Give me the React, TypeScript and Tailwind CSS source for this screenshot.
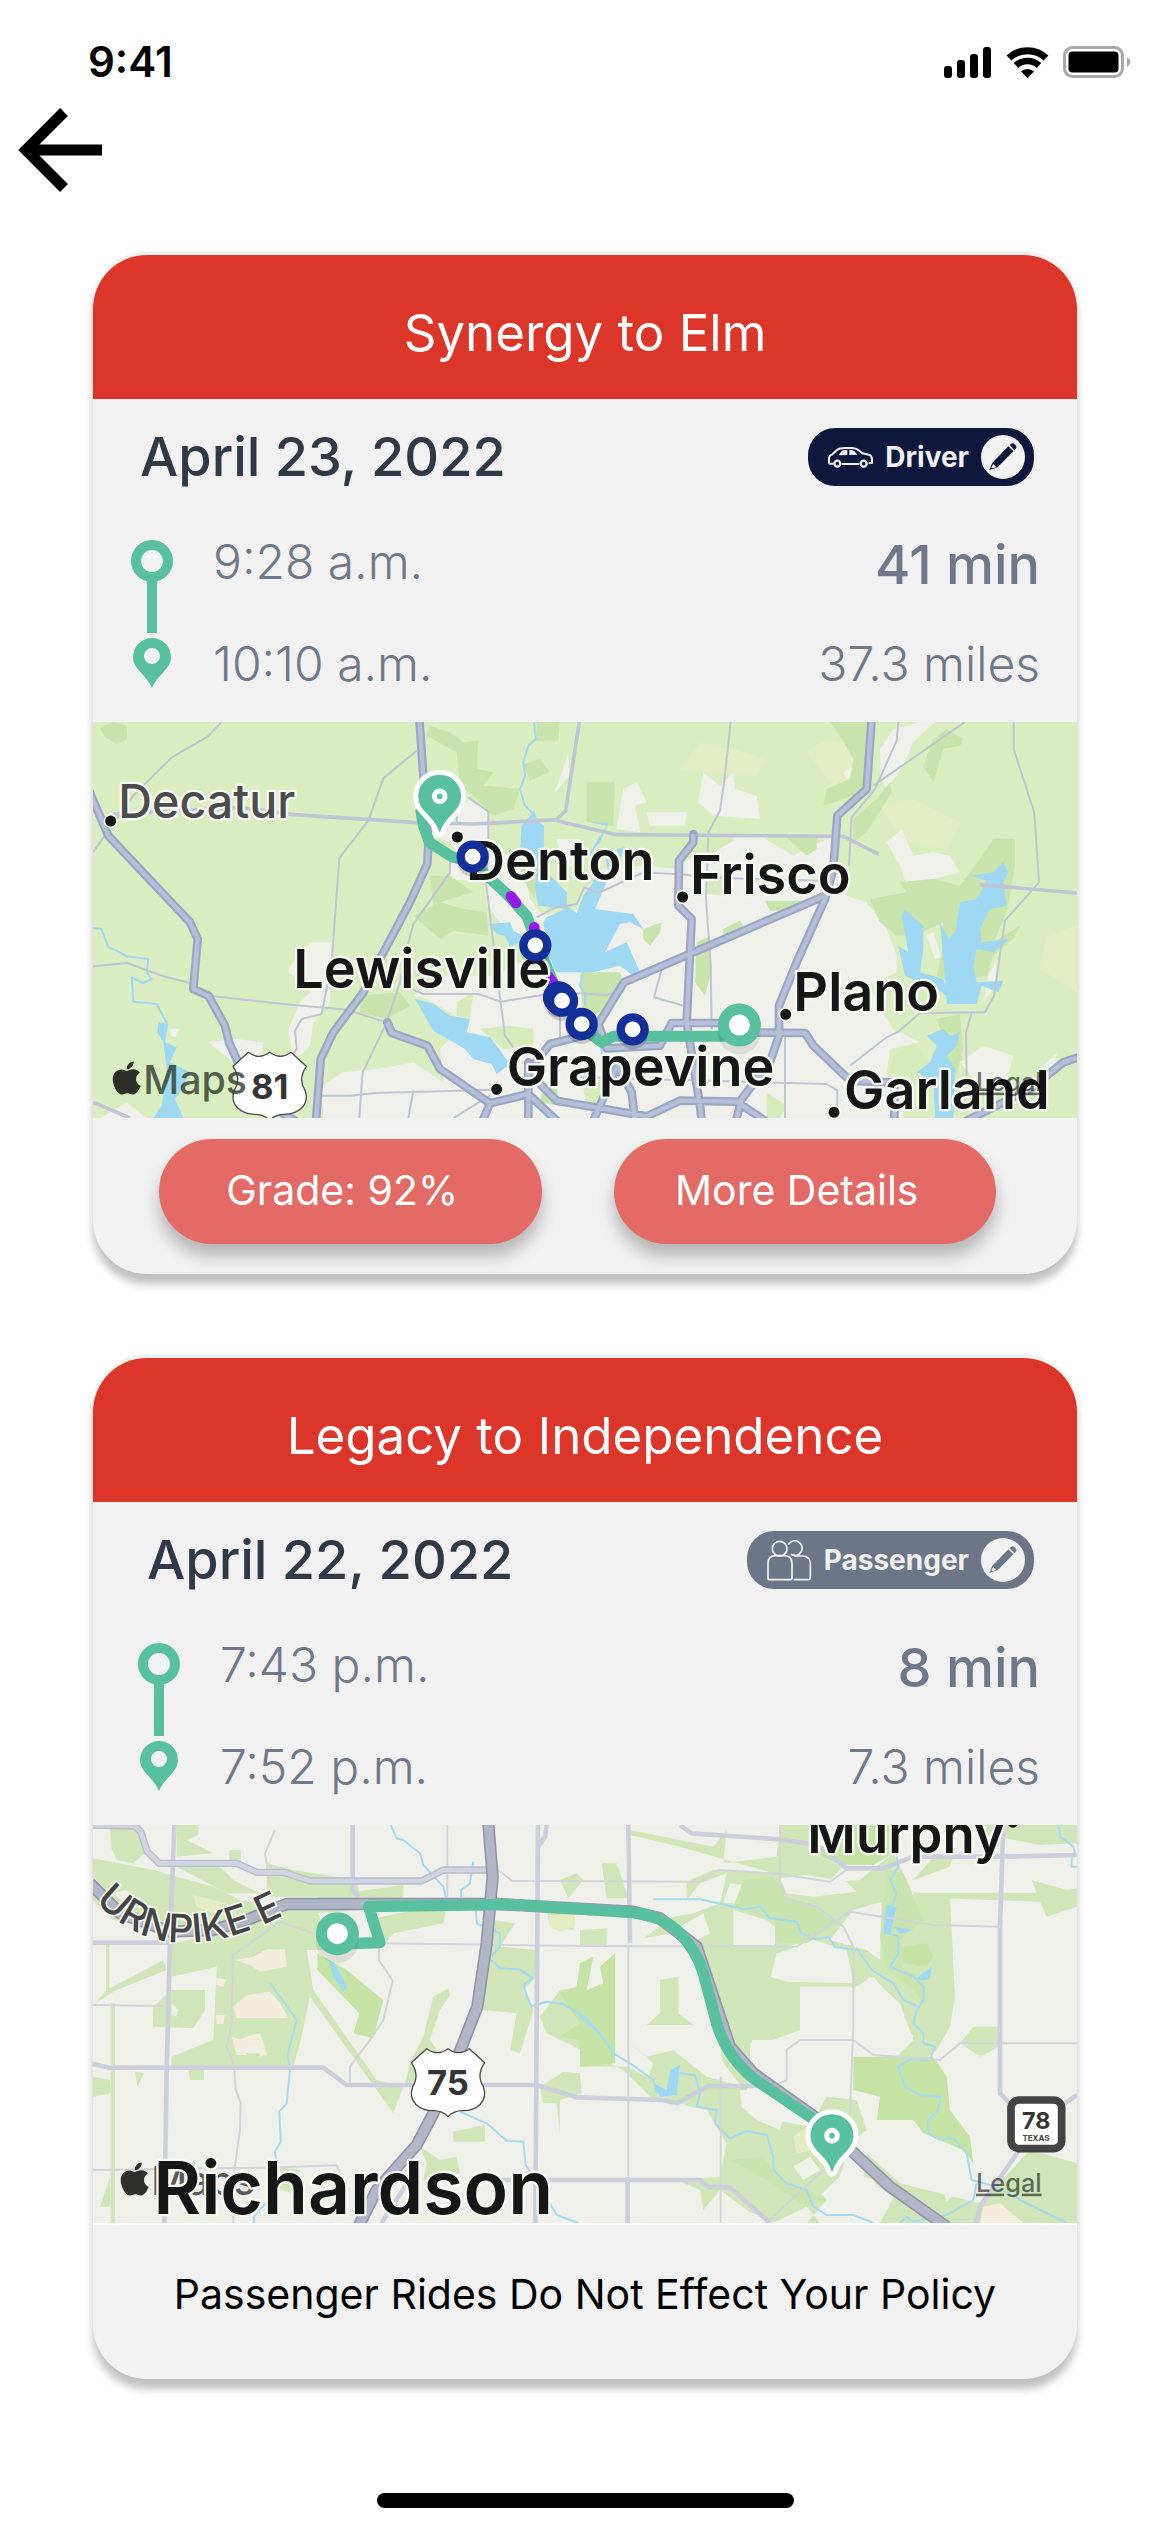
import type { ReactNode } from 'react';
import { FaApple } from 'react-icons/fa';

type Role = 'driver' | 'passenger';

interface Ride {
  id: string;
  title: string;
  date: string;
  role: Role;
  start: string;
  end: string;
  duration: string;
  distance: string;
}

const RIDES: Ride[] = [
  {
    id: 'synergy-elm',
    title: 'Synergy to Elm',
    date: 'April 23, 2022',
    role: 'driver',
    start: '9:28 a.m.',
    end: '10:10 a.m.',
    duration: '41 min',
    distance: '37.3 miles',
  },
  {
    id: 'legacy-independence',
    title: 'Legacy to Independence',
    date: 'April 22, 2022',
    role: 'passenger',
    start: '7:43 p.m.',
    end: '7:52 p.m.',
    duration: '8 min',
    distance: '7.3 miles',
  },
];

const ROUTE = '#58c09f';

function StatusBar() {
  return (
    <header className="flex h-[104px] items-center justify-between pt-5 pr-[39px] pl-[88px]">
      <span className="text-[42px] leading-[48px] font-semibold">9:41</span>
      <div className="flex items-center gap-[14px]">
        <svg className="h-8 w-12" viewBox="0 0 48 32" aria-label="Signal">
          <rect x="0" y="20" width="8" height="12" rx="3" />
          <rect x="13" y="14" width="8" height="18" rx="3" />
          <rect x="26" y="8" width="8" height="24" rx="3" />
          <rect x="39" y="1" width="8" height="31" rx="3" />
        </svg>
        <svg className="h-8 w-[43px]" viewBox="0 0 43 32" fill="none" stroke="#000" aria-label="Wi-Fi">
          <path d="M3 12 A27 27 0 0 1 40 12" strokeWidth="7" />
          <path d="M10 19.500 A17 17 0 0 1 33 19.500" strokeWidth="6.500" />
          <path d="M15 25.500 A9.500 9.500 0 0 1 28 25.500 L21.500 32 Z" fill="#000" stroke="none" />
        </svg>
        <svg className="h-8 w-[68px]" viewBox="0 0 68 32" aria-label="Battery">
          <rect x="1.500" y="1.500" width="58" height="29" rx="8" fill="none" stroke="#a8a8a8" strokeWidth="3" />
          <rect x="5.500" y="5.500" width="50" height="21" rx="4" />
          <path d="M64 11 Q71 16 64 21 Z" fill="#a8a8a8" />
        </svg>
      </div>
    </header>
  );
}

function CarIcon() {
  return (
    <svg className="h-[21px] w-[45px] shrink-0" viewBox="0 0 135 63" fill="none" stroke="#f1f1f1" strokeWidth="6" strokeLinejoin="round" aria-hidden="true">
      <path d="M16 50 H7 Q2 50 3 42 V33 Q4 25 13 22 L27 9 Q34 3 50 3 H72 Q84 3 92 10 L103 19 L122 23 Q132 26 132 37 V48 H122" />
      <path d="M41 51 H94" />
      <path d="M32 25 L41 12 Q44 9 52 9 H58 V24 Z M64 9 H71 Q79 10 88 23 L64 24 Z" fill="#f1f1f1" stroke="none" />
      <circle cx="28" cy="50" r="9" strokeWidth="7" />
      <circle cx="107" cy="50" r="9" strokeWidth="7" />
    </svg>
  );
}

function PassengersIcon() {
  return (
    <svg className="h-[41px] w-[45px] shrink-0" viewBox="0 0 135 123" fill="none" stroke="#f1f1f1" strokeWidth="5" strokeLinejoin="round" aria-hidden="true">
      <circle cx="38" cy="26" r="22" />
      <path d="M3 117 V70 Q3 48 24 47 H53 Q75 48 75 70 V112 Q75 119 69 119 H8 Q3 119 3 117 Z" />
      <path d="M64 14 A22 22 0 1 1 72 43" />
      <path d="M82 48 H108 Q130 50 130 70 V112 Q130 119 124 119 H80" />
    </svg>
  );
}

function PencilIcon({ color }: { color: string }) {
  return (
    <svg className="h-[44px] w-[44px] shrink-0" viewBox="0 0 132 132" aria-hidden="true">
      <circle cx="66" cy="66" r="66" fill="#f1f1f1" />
      <path d="M25 105 L34 83 L82 34 L97 49 L50 97 Z" fill={color} />
      <path d="M86 30 L91 26 Q96 23 101 28 L105 32 Q108 37 104 42 L100 46 Z" fill={color} />
      <path d="M37 87 L46 96 L35 100 L31 97 Z" fill="#f1f1f1" />
    </svg>
  );
}

function RoleBadge({ role }: { role: Role }) {
  const isDriver = role === 'driver';
  return (
    <button
      type="button"
      className={`flex h-[58px] items-center gap-3 rounded-[27px] pr-[9px] pl-5 text-[28px] leading-9 font-bold text-[#f1f1f1] ${isDriver ? 'bg-[#0e173c]' : 'bg-[#6d7688]'}`}
    >
      {isDriver ? <CarIcon /> : <PassengersIcon />}
      {isDriver ? 'Driver' : 'Passenger'}
      <PencilIcon color={isDriver ? '#0e173c' : '#6d7688'} />
    </button>
  );
}

function RouteGlyph() {
  return (
    <svg className="h-[150px] w-[42px] shrink-0" viewBox="0 0 42 150" aria-hidden="true">
      <circle cx="21" cy="21" r="16" fill="none" stroke={ROUTE} strokeWidth="10" />
      <rect x="16" y="41" width="10" height="52" fill={ROUTE} />
      <path fillRule="evenodd" fill={ROUTE} d="M21 98 A19 19 0 0 1 40 117 C40 129 27 134 21 148 C15 134 2 129 2 117 A19 19 0 0 1 21 98 Z M21 108 A8 8 0 1 0 21 124 A8 8 0 1 0 21 108 Z" />
    </svg>
  );
}

interface LabelProps {
  x: number;
  y: number;
  size?: number;
  color?: string;
  weight?: number;
  children: ReactNode;
}

function Label({ x, y, size = 162, color = '#161616', weight = 600, children }: LabelProps) {
  return (
    <text x={x} y={y} fontSize={size} fontWeight={weight} fill={color} stroke="#f6f8f2" strokeWidth="14" strokeLinejoin="round" paintOrder="stroke">
      {children}
    </text>
  );
}

function Town({ x, y }: { x: number; y: number }) {
  return <circle cx={x} cy={y} r="19" fill="#161616" stroke="#f6f8f2" strokeWidth="5" />;
}

function StopDot({ x, y }: { x: number; y: number }) {
  return (
    <g>
      <circle cx={x} cy={y + 14} r="46" fill="#000" opacity="0.16" />
      <circle cx={x} cy={y} r="36" fill="#fff" stroke="#13309a" strokeWidth="25" />
    </g>
  );
}

function StartRing({ x, y }: { x: number; y: number }) {
  return (
    <g>
      <circle cx={x} cy={y + 24} r="64" fill="#000" opacity="0.08" />
      <circle cx={x} cy={y} r="48" fill="#fff" stroke={ROUTE} strokeWidth="33" />
    </g>
  );
}

function MapPin({ x, y }: { x: number; y: number }) {
  return (
    <g transform={`translate(${x} ${y})`}>
      <path d="M0 -72 A72 72 0 0 1 72 0 C72 50 18 66 9 108 Q0 122 -9 108 C-18 66 -72 50 -72 0 A72 72 0 0 1 0 -72 Z" fill={ROUTE} stroke="#fff" strokeWidth="15" strokeLinejoin="round" />
      <circle r="16" fill={ROUTE} stroke="#fff" strokeWidth="15" />
    </g>
  );
}

function UsShield({ x, y, children }: { x: number; y: number; children: ReactNode }) {
  return (
    <g transform={`translate(${x} ${y})`}>
      <path
        d="M-64 -100 Q-32 -76 0 -100 Q32 -76 64 -100 L110 -58 Q84 -20 106 14 C122 60 84 86 44 86 Q16 86 0 104 Q-16 86 -44 86 C-84 86 -122 60 -106 14 Q-84 -20 -110 -58 Z"
        fill="#fff"
        stroke="#4a4a4a"
        strokeWidth="4"
        strokeLinejoin="round"
      />
      <text x="0" y="40" fontSize="104" fontWeight="700" fill="#333" textAnchor="middle">
        {children}
      </text>
    </g>
  );
}

function MapCredit({ x, color }: { x: number; color: string }) {
  return (
    <g fill={color} opacity="0.8">
      <FaApple x={x - 15} y={1050} size={114} />
      <text x={x + 92} y="1155" fontSize="118" fontWeight="500">
        Maps
      </text>
    </g>
  );
}

function LegalLink() {
  return (
    <a href="#legal">
      <text x="2688" y="1145" fontSize="76" fontWeight="500" fill="#000" opacity="0.55" textDecoration="underline">
        Legal
      </text>
    </a>
  );
}

function DentonMap() {
  return (
    <svg className="block h-auto w-full" viewBox="39 39 2952 1188" role="img" aria-label="Route from Denton to Plano">
      <rect x="39" y="39" width="2952" height="1188" fill="#d9edc0" />

      {/* pale fields */}
      <g fill="#e2edc2">
        <path d="M1800 180 L1860 100 L1960 120 L2060 150 L2030 200 L1870 190 Z M2240 90 L2310 110 L2330 200 L2260 230 L2180 130 Z M2400 290 L2500 270 L2640 340 L2600 420 L2470 400 Z M2900 680 L2991 650 V850 L2880 780 Z" />
      </g>

      {/* built-up areas */}
      <g fill="#eff0ea">
        <path d="M1130 330 L1165 270 L1225 310 L1225 400 L1330 470 L1350 570 L1390 620 L1500 600 L1560 480 L1700 470 L1790 480 L1900 390 L2040 380 L2140 440 L2260 380 L2300 560 L2360 580 L2420 660 L2450 740 L2450 790 L2370 830 L2400 900 L2440 960 L2520 1000 L2430 1020 L2420 1090 L2470 1160 L2470 1227 H730 L724 1130 L790 1090 L890 1080 L1000 1060 L1090 1120 L1080 1020 L1160 940 L1040 870 L1000 860 L1080 800 L1250 800 L1350 740 L1260 640 L1220 590 L1220 520 L1110 510 L1110 480 L1130 430 L1110 400 L1020 370 Z" />
        <path d="M630 770 L690 700 L755 700 L750 880 L700 940 L690 1010 L640 1060 L625 960 L660 880 L700 840 L625 790 Z" />
        <path d="M1855 280 L1870 190 L1920 230 L1960 190 L1965 240 L2030 260 L2040 330 L1900 320 Z M1610 360 L1630 240 L1670 220 L1700 280 L1665 290 L1680 370 Z M1700 310 L1820 310 L1815 350 L1710 350 Z" />
        <path d="M2400 120 L2440 60 L2520 39 H2570 L2540 60 L2500 100 L2470 170 L2420 240 L2400 200 Z M2420 400 L2465 360 L2500 440 L2560 430 L2610 440 L2640 490 L2560 510 L2480 530 L2460 470 Z" />
        <path d="M1425 250 L1465 130 L1468 200 Z M1525 270 L1550 262 L1570 280 L1550 305 Z M2290 190 L2320 170 L2325 190 L2300 210 Z M1430 390 L1500 390 L1480 470 L1450 480 Z" />
        <path d="M385 1000 L470 990 L550 1000 L545 1040 L460 1060 Z M270 960 L298 960 L290 985 L272 980 Z M2640 1060 L2710 1010 L2800 1040 L2780 1120 L2700 1130 Z M2880 1080 L2930 1030 L2920 1110 Z M60 1227 L140 1180 L200 1227 Z" />
        <path d="M2540 680 L2560 670 L2585 745 L2565 750 Z M2725 800 L2750 750 L2745 830 L2710 880 Z M2590 600 L2620 585 L2640 600 L2610 620 Z" />
      </g>

      {/* woodland */}
      <g fill="#c8e3ac">
        <path d="M60 55 L100 39 L140 50 L142 90 L110 105 L75 85 Z M1040 80 L1050 50 L1110 70 L1150 100 L1195 95 L1190 180 L1240 190 L1210 230 L1320 240 L1300 300 L1240 320 L1180 260 L1140 230 L1130 130 Z M1370 39 H1440 L1435 95 L1370 95 Z M1330 165 L1380 150 L1410 190 L1350 215 Z" />
        <path d="M1050 500 L1110 500 L1180 550 L1080 580 L1150 600 L1220 610 L1225 680 L1120 665 L1080 690 L1000 620 L1060 590 Z M1320 480 L1370 430 L1365 570 L1340 530 Z M840 860 L960 850 L990 890 L920 930 L840 910 Z" />
        <path d="M2250 39 H2360 L2355 240 L2320 260 L2230 290 L2240 240 L2310 210 L2320 150 L2280 80 Z M2390 270 L2430 220 L2435 250 L2360 370 L2320 400 L2320 330 Z M1520 220 L1605 220 L1600 350 L1520 340 Z M2115 380 L2210 385 L2210 420 L2180 440 Z" />
        <path d="M2530 170 L2560 90 L2600 60 L2650 90 L2640 110 L2590 120 L2560 220 Z M2370 570 L2480 550 L2460 520 L2560 510 L2640 530 L2700 450 L2740 390 H2805 L2805 470 L2780 610 L2740 700 L2820 650 L2800 690 L2740 740 L2720 800 L2620 820 L2570 800 L2585 740 L2590 640 L2500 680 L2450 680 L2400 640 Z" />
        <path d="M1500 790 L1620 790 L1630 820 L1560 910 L1510 930 Z M1850 700 L1890 680 L1895 780 L1875 860 L1845 820 Z M2055 575 L2180 575 L2120 605 L2070 605 Z M1930 660 L1980 635 L1990 650 L1930 690 Z M1690 660 L1745 640 L1740 670 L1710 710 L1690 690 Z" />
        <path d="M2570 930 L2640 915 L2650 1020 L2620 1130 L2570 1080 L2600 1020 Z M1390 1130 L1430 1140 L1440 1190 L1380 1180 Z" />
      </g>
      <g fill="#d5ebba">
        <path d="M2440 1040 L2500 1000 L2550 1060 L2500 1100 L2430 1090 Z M1880 500 L1930 490 L1930 560 L1880 555 Z M1800 400 L1960 380 L1960 395 L1850 460 Z M1200 960 L1280 950 L1360 960 L1360 1010 L1270 1020 Z M1130 880 L1180 850 L1170 930 L1130 920 Z M2060 1150 L2120 1190 L2100 1227 H2060 Z M1510 1140 L1560 1110 L1580 1180 L1520 1190 Z" />
      </g>

      {/* lakes and rivers */}
      <g fill="#9ed8f3">
        <path d="M1362 305 L1372 335 L1392 350 L1390 480 L1460 550 L1460 590 L1490 612 L1510 560 L1540 520 L1530 430 L1560 380 L1580 350 L1530 340 L1585 342 L1560 400 L1540 420 L1580 520 L1545 600 L1660 615 L1690 660 L1650 640 L1620 645 L1575 730 L1640 700 L1680 790 L1660 800 L1620 770 L1540 790 L1430 790 L1405 740 L1390 640 L1400 625 L1455 600 L1375 590 L1365 540 L1370 460 L1320 430 L1325 350 Z" />
        <path d="M1225 645 L1290 640 L1300 665 L1330 680 L1320 700 L1290 715 L1275 680 L1250 675 Z M1575 440 L1600 420 L1605 470 L1585 490 Z M1610 420 L1635 415 L1620 450 Z" />
        <path d="M1005 870 L1060 885 L1110 920 L1170 930 L1160 970 L1230 985 L1250 1010 L1290 1065 L1250 1095 L1235 1065 L1180 1050 L1155 1020 L1060 965 Z" />
        <path d="M2465 620 L2475 600 L2505 630 L2530 650 L2530 720 L2520 790 L2590 810 L2610 870 L2585 850 L2475 800 L2455 710 L2485 730 Z M2580 640 L2605 690 L2625 670 L2640 580 L2690 570 L2720 515 L2675 500 L2740 490 L2770 460 L2785 490 L2770 520 L2780 590 L2730 600 L2700 660 L2705 700 L2790 690 L2740 730 L2690 720 L2680 770 L2690 820 L2770 815 L2755 850 L2705 830 L2690 885 L2600 885 L2595 800 Z" />
        <path d="M2540 980 L2590 960 L2610 980 L2640 970 L2630 1010 L2600 1040 L2625 1080 L2620 1227 H2565 L2560 1120 L2510 1090 L2550 1060 L2570 1010 Z" />
        <path d="M235 940 L265 945 L255 1000 L290 1015 L270 1060 L330 1090 L300 1150 L285 1170 L310 1227 H220 L245 1190 L260 1080 L250 1000 L232 970 Z" />
      </g>
      <g fill="none" stroke="#9ed8f3" strokeWidth="6" strokeLinejoin="round">
        <path d="M1362 39 L1368 90 L1345 110 L1330 160 L1335 200 L1320 240 L1335 290 L1365 320" />
        <path d="M39 657 L65 660 L85 715 L110 725 L140 742 L205 750 L200 790 L215 810 L190 822 L155 805 L160 878 L230 885 L262 945" />
        <path d="M1510 790 L1500 830 L1515 860 L1515 890 M1560 960 L1570 1100" />
      </g>

      {/* local roads */}
      <g fill="none" stroke="#c0c4d3" strokeWidth="6" strokeLinejoin="round">
        <path d="M425 39 L383 83 L275 145 L160 260 L39 430" />
        <path d="M1010 125 L910 208 L865 335 L778 447 L755 760 L725 915 L665 930 L645 965 L650 1020 L600 1100" />
        <path d="M39 772 L142 762 L250 802 L330 822 M390 860 L610 885 L800 902 L920 940 L960 820 L985 700 L1000 645 L1110 490 V430" />
        <path d="M1130 345 V260 M1165 265 L1225 308 V420 L1218 520 L1262 880 L1275 980 L1300 1015 M960 825 L1030 855 H1195 L1262 878 L1440 850 L1580 858 L1630 840" />
        <path d="M1370 625 L1420 598 L1490 585 L1513 535 L1555 552 L1690 490 L1820 497 L1850 505 L2220 515" />
        <path d="M1952 39 L1933 215 L1920 305 L1885 370 L1878 570 L1892 770 L1895 960 M1745 780 L1722 865 L1810 890" />
        <path d="M2455 39 L2450 95 L2385 240 L2315 325 L2307 470 M2655 39 L2380 230 M2801 39 V120 L2863 312 L2877 520 L2775 635 L2742 860 L2715 910 L2520 912 L2455 968 L2420 985 L2310 1070 M2675 912 L2658 970 L2660 1100" />
        <path d="M725 1160 L810 1160 L885 1152 L1240 1142 M838 1227 L848 1090 L920 940 M1000 1145 L985 1227 M1120 1227 L1230 1160 M1500 1105 L2240 1125 L2272 1145 L2272 1227 M2115 980 V1227 M1440 900 V1000" />
      </g>
      <g fill="none" stroke="#c0c5d6" strokeWidth="11" strokeLinejoin="round">
        <path d="M100 315 L480 296 L640 317 L1000 340 L1180 345 L1430 332 L1457 305 L1498 39 M1430 335 L1610 377 L2290 382 L2395 435 M2700 527 L2991 552 M39 1180 L150 1227" />
      </g>

      {/* highways */}
      <g fill="none" stroke="#9aa6c4" strokeWidth="26" strokeLinejoin="round" strokeLinecap="round">
        <path d={HIGHWAYS} />
      </g>
      <path d={HIGHWAYS} fill="none" stroke="#b5bfd8" strokeWidth="13" strokeLinejoin="round" />

      {/* driven route */}
      <path d="M1022 300 L1030 350 L1048 400 L1115 443 L1178 460 L1280 555 L1340 620 L1366 690 L1440 870 L1510 960 L1565 1000 L1600 982 H1978" fill="none" stroke={ROUTE} strokeWidth="33" strokeLinejoin="round" />
      <path d="M1293 562 L1308 582 M1363 655 V680 M1395 790 L1440 850" fill="none" stroke="#921be8" strokeWidth="32" strokeLinecap="round" />

      <Town x={92} y={336} />
      <Town x={1132} y={384} />
      <Town x={1808} y={564} />
      <Town x={2117} y={916} />
      <Town x={1250} y={1141} />
      <Town x={2262} y={1210} />
      <Label x={115} y={327} size={140} color="#4c4c4c" weight={500}>
        Decatur
      </Label>
      <Label x={1158} y={513}>Denton</Label>
      <Label x={1830} y={556}>Frisco</Label>
      <Label x={640} y={838}>Lewisville</Label>
      <Label x={2140} y={907}>Plano</Label>
      <StopDot x={1178} y={443} />
      <StopDot x={1366} y={709} />
      <StopDot x={1437} y={865} />
      <StopDot x={1446} y={875} />
      <StopDot x={1505} y={945} />
      <StopDot x={1658} y={961} />
      <StartRing x={1978} y={948} />
      <Label x={1280} y={1130}>Grapevine</Label>
      <Label x={2292} y={1200}>Garland</Label>
      <MapPin x={1079} y={262} />
      <UsShield x={569} y={1130}>81</UsShield>
      <MapCredit x={98} color="#2d3c2c" />
      <LegalLink />
    </svg>
  );
}

const HIGHWAYS =
  'M25 240 L85 380 L330 640 L353 690 L340 840 L385 860 L435 950 L447 1000 L520 1160 L645 1235 M1018 30 L1030 200 L1045 400 L1042 465 L990 580 L905 740 L850 850 L760 970 L722 1050 L708 1235 M922 940 L935 972 L1042 1010 L1080 1080 L1230 1183 L1345 1155 L1430 1235 M1230 1183 L1208 1235 M1345 1060 V1235 M1365 1110 L1430 1175 L1700 1222 L1800 1175 L1970 1178 L2055 1235 M1350 1080 L1410 1005 L1510 980 M2375 30 L2360 240 L2272 320 L2260 480 L2235 570 L2150 760 L2097 890 L2097 980 L2070 1060 L1985 1170 L1968 1235 M2235 560 L1632 820 L1555 945 L1580 1018 L1740 1010 L1775 942 H1930 L1985 970 L2175 972 L2200 1010 L2310 1115 L2430 1120 M1840 375 L1840 400 L1797 455 L1795 590 L1835 630 L1820 940 L1860 1190 L1865 1235 M1540 1235 L1612 1070 L1655 1150 L1665 1235 M2995 1045 L2950 1060 L2850 1140 L2660 1235 M2443 1235 V1130';

function RichardsonMap() {
  return (
    <svg className="block h-auto w-full border-b-2 border-white" viewBox="39 45 2952 1194" role="img" aria-label="Route through Richardson">
      <rect x="39" y="45" width="2952" height="1194" fill="#f0f0ea" />

      {/* parks */}
      <g fill="#d0e6b8">
        <path d="M90 45 H180 L195 130 L160 160 L110 150 L92 110 Z M39 145 L220 180 L400 230 L480 270 L600 290 L720 260 L970 225 V260 L850 300 L700 310 L600 330 L450 370 L280 360 L100 330 L39 270 Z M290 45 H355 V75 L320 90 L400 130 L290 140 Z M448 120 H482 V160 L448 165 Z M290 170 H420 L460 210 L540 250 L440 250 Z M560 160 L640 180 L830 210 L840 260 H560 Z" />
        <path d="M275 400 L450 365 L600 330 L710 300 L760 420 L680 420 L700 540 L890 810 L970 830 L940 910 L840 770 L690 560 L660 700 L640 770 H275 V740 L400 690 L410 470 L275 500 Z M45 580 L80 540 L250 450 L260 480 L110 540 Z M78 400 H88 V540 H78 Z M92 580 H105 V1239 H92 Z M220 590 L275 540 H375 V600 L340 655 L218 650 Z" />
        <path d="M860 330 L1100 280 L1090 340 L940 370 L920 395 Z M1060 560 L1105 535 L1110 555 L1080 600 L1050 690 L1100 760 L1090 800 L975 820 L990 760 L1030 680 Z M1240 330 L1305 340 L1260 410 L1370 420 L1370 500 L1330 540 L1360 600 L1320 730 L1290 720 L1310 610 L1205 600 L1215 500 Z M1440 210 L1490 190 L1510 210 L1465 265 Z M1400 300 H1480 V360 L1410 350 Z" />
        <path d="M1440 540 L1500 530 V770 H1640 L1800 850 L1720 870 L1630 780 L1400 670 L1380 620 Z M1380 830 L1450 785 L1500 790 L1505 850 L1440 870 L1440 970 L1430 880 L1390 880 Z M1120 965 L1215 945 V995 H1120 Z M1020 1010 L1080 1050 L1130 1040 L1140 1090 L1030 1110 L1040 1060 Z M600 1070 L660 1080 L640 1150 L600 1140 Z M325 780 H372 V810 H330 Z M165 785 L192 790 L172 830 Z M39 800 L90 810 L95 850 L39 860 Z M60 1190 L90 1100 L92 1190 Z" />
        <path d="M1565 160 H1610 L1645 265 L1580 265 Z M1650 60 L1900 110 L1940 60 L1930 160 L2090 140 L2100 45 H2200 L2195 130 L2290 170 L2240 220 L2340 210 L2440 130 L2480 210 L2500 260 L2610 265 L2625 560 L2610 650 L2570 720 L2520 760 L2450 740 L2500 690 L2460 580 L2370 500 L2325 540 L2310 530 H2240 L2160 530 L2160 660 L2080 690 L2015 690 L2000 850 L1930 760 L1900 620 L1850 450 L1780 370 L1690 385 L1780 320 L1840 310 L1920 280 L1940 190 L1860 220 L1820 270 V215 L1900 180 L2080 190 L1800 110 L1650 75 Z" />
        <path d="M2500 248 H2870 L2855 210 L2960 240 L2991 235 V290 L2900 320 L2880 275 L2500 262 Z M1740 510 L1795 500 V610 L1840 645 L1700 645 L1740 610 Z M2680 650 H2755 V710 L2700 740 L2640 700 Z M2700 45 H2991 V100 L2880 105 L2700 70 Z M2500 210 L2570 130 L2620 140 L2610 170 Z M1500 360 L1580 355 V405 H1500 Z" />
        <path d="M1640 690 L1700 740 L1780 720 L1880 800 L1990 830 L2080 930 L2190 950 L2240 860 L2330 870 L2360 960 L2310 1000 L2280 1100 L2180 1190 L2080 1239 L2000 1200 L1920 1140 L1870 1200 L1860 1140 L1790 1110 L1920 1100 L1940 1000 L1880 900 L1830 890 L1750 860 L1690 840 L1720 760 Z M1930 830 L2050 960 L2170 1090 L2240 1170 L2180 1239 H2400 L2440 1160 L2350 1100 L2360 1030 L2460 1120 L2580 1150 L2700 1180 L2850 1020 L2991 1060 V1239 H2220 L2130 1130 L2020 1080 L1950 1050 Z" />
      </g>
      <g fill="#f0f0ea">
        <path d="M470 690 L540 670 L560 730 L480 730 Z M275 580 L295 600 L290 620 L275 615 Z M100 250 L140 240 L160 270 L130 280 Z M2080 420 L2200 390 L2300 420 L2320 520 L2120 515 L2070 500 Z M2100 205 L2180 195 L2300 215 L2330 245 L2200 260 L2120 250 Z M1960 300 L2060 330 L2085 350 V405 H1960 Z M2250 390 L2320 300 L2405 275 L2400 450 L2360 420 Z M2170 530 L2310 540 L2380 500 L2440 570 L2500 680 L2450 740 L2370 720 L2330 690 L2170 690 Z" />
        <path d="M1980 840 L2080 840 L2120 890 L2100 960 L2030 930 L1985 890 Z M2010 700 L2060 695 L2080 730 L2060 820 L2010 790 Z M2140 730 L2190 700 L2200 760 L2150 750 Z M2360 940 L2480 920 L2600 1000 L2610 1060 L2540 1100 L2470 1050 L2370 990 Z M2300 1080 L2380 1110 L2430 1190 L2410 1210 L2320 1170 Z M2580 1110 L2640 1080 L2655 1120 L2600 1175 Z M1800 350 L1870 310 L1890 370 L1850 390 Z M1520 500 L1540 440 L1570 450 L1560 530 L1520 540 Z M2140 1070 L2190 1040 L2220 1080 L2170 1110 Z M1950 220 L1990 225 V280 L1930 280 Z" />
      </g>
      <path d="M1840 405 L2150 412 L2090 430 L2070 510 L2160 530 L2160 650 L2100 660 L2010 655 L2000 690 L1950 700 L1900 560 Z" fill="#d0e6b8" />
      <g fill="#c4e3a5">
        <path d="M712 430 L800 480 L910 570 L880 685 L820 670 L838 610 L712 480 Z M1500 460 L1540 440 L1520 540 L1570 520 L1560 470 L1605 430 V760 L1500 770 V690 L1440 680 L1500 640 L1440 550 L1490 530 Z M2465 410 L2540 400 L2560 440 L2540 470 L2470 460 Z M2200 130 L2310 45 L2440 45 V130 L2380 165 L2280 165 Z M2320 740 L2420 740 L2560 740 L2600 800 L2610 900 L2670 980 L2680 1060 L2650 1020 L2530 970 L2500 930 L2390 930 L2400 860 L2320 840 Z" />
      </g>
      <g fill="#c9e4ae">
        <path d="M1990 210 L2080 200 L2130 270 L2200 290 L2270 340 L2180 400 H2090 L2085 330 L1960 290 Z M2420 180 L2470 190 L2500 260 L2530 330 L2460 390 L2470 480 L2530 500 L2540 590 L2500 540 L2420 480 L2400 380 Z M1950 1050 L2050 1040 L2100 1110 L2240 1170 L2180 1190 L2060 1110 Z" />
      </g>
      <g fill="#f4ecdc">
        <path d="M465 450 L520 440 L560 418 H615 L620 470 L540 485 L510 465 Z M460 590 L500 555 L570 545 L600 580 L625 625 L470 625 Z M455 680 L490 690 L500 735 L470 735 Z M495 680 L540 670 L560 735 L540 740 L530 705 L495 710 Z M408 505 L440 508 L430 530 L410 525 Z M408 615 H435 L430 642 H410 Z M2710 1190 L2760 1180 L2830 1239 H2700 Z" />
      </g>
      <g fill="#e4ecc3">
        <path d="M340 255 L440 280 L400 310 L350 290 Z M1408 315 H1485 V350 L1440 365 L1408 350 Z M2140 980 L2180 950 L2200 1020 L2150 1030 Z" />
      </g>

      {/* creeks */}
      <g fill="none" stroke="#a3dbf3" strokeWidth="6" strokeLinejoin="round">
        <path d="M932 45 L950 85 L970 90 L1020 130 L1030 165 L1090 230 L1098 262 M1180 155 L1170 220 L1143 240 V262 M1188 300 L1190 340 L1260 370 V410 L1228 445 L1260 475 L1320 478 L1358 505 L1330 525 L1345 570 L1355 588 L1400 575 L1450 582 L1520 625 L1560 670 M570 520 L600 560 L650 630 L622 735 L630 780 L620 880 L598 905 L602 995 L585 1025 L600 1130 L522 1220 V1239 M1140 905 L1220 940 L1280 992 L1330 995 L1337 1065 L1380 1130 L1430 1215 L1495 1239" />
        <path d="M1720 268 H1860 L1940 285 L1990 298 L2040 290 L2070 325 L2150 335 L2165 370 L2210 388 L2245 380 L2265 412 L2335 420 L2375 480 L2440 520 L2470 570 L2510 588 M2450 140 L2455 170 L2430 210 L2450 250 L2435 290 L2430 370 L2455 380 L2455 430 L2430 470 L2500 500 L2530 530 V570 L2510 600 L2500 640 L2530 670 L2530 700 L2565 710 L2550 750 L2490 748 L2455 770 L2475 830 L2520 855 L2580 860 L2575 900 L2545 930 L2545 970 L2580 990 L2620 985 L2660 1030 L2675 1110 L2750 1130 L2820 1170 L2960 1239" />
        <path d="M1500 620 L1560 670 L1600 730 L1650 760 L1720 810 L1730 850 M1800 790 L1845 795 L1860 850 L1850 890 L1910 900 L1905 940 L1950 985 L2000 963 L2060 975 L2080 1040 L2080 1080 L2120 1120 L2180 1140 L2200 1190 L2240 1215 L2320 1215 L2380 1239 M2460 1239 L2480 1220 L2500 1235 L2600 1215 L2680 1170 L2690 1120 M2935 45 L2940 80 L2980 110 L2985 130 M2991 170 H2975 V140" />
      </g>
      <path d="M745 450 L765 460 L800 530 L790 545 L760 500 Z M2420 285 L2450 290 L2430 375 L2410 370 Z M2440 350 L2500 360 L2460 372 Z M2510 505 L2555 470 L2550 505 L2530 513 Z M1720 820 L1760 840 L1770 780 L1800 765 L1790 855 L1740 860 Z" fill="#9ed8f3" />

      {/* streets */}
      <g fill="none" stroke="#d3d4da" strokeWidth="6" strokeLinejoin="round">
        <path d="M585 60 L555 130 L570 230 M1102 45 V260 M1255 180 L1295 212 L1860 215 L1915 180 L2080 190 L2250 215 L2300 180 M910 400 L1500 408 L2150 410 L2310 305 L2560 345 L2760 350 M39 585 L255 588 M455 440 L600 335 L700 370 M458 430 L455 640 L440 710 L463 770 L467 840 L482 880 L480 960 L460 1100 V1239 M897 410 V450 L938 512 L910 630 L870 690 L810 770 V820 M39 1080 L600 1072 L770 1066 L790 1110" />
        <path d="M2100 45 V220 L2120 265 L2210 290 L2290 350 L2320 410 L2320 640 L2310 910 M2120 810 V720 L2160 690 H2320 L2380 735 L2580 750 L2640 700 L2991 700 M2060 1239 L2230 1080 M1645 1100 V410 M1922 800 V1239 M2100 820 L2120 810" />
      </g>
      <g fill="none" stroke="#cccfdb" strokeWidth="14" strokeLinejoin="round">
        <path d="M39 398 H270 M283 45 L270 400 L260 780 L253 1239 M39 762 L90 773 H730 L800 825 H1370 L1490 862 L1750 870 L1790 880 L1885 828 H2040 M818 45 V240 L835 262 M1374 45 L1366 1239 M1400 45 L1395 80 L1375 110 M1645 45 L1650 400 M1643 1100 V1239 M1200 1110 H1860 L1885 1132 H1950 L2070 1239 M1800 45 L1835 70 L2100 88 L2210 105 L2300 175 H2410 L2500 140 H2770 L2991 135 M2770 45 L2760 350 V850 L2800 890 M2991 855 L2880 930 L2700 1190 L2688 1239 M905 1239 L1000 1090" />
      </g>
      <path d={ARTERIAL} fill="none" stroke="#b9bdcc" strokeWidth="22" strokeLinejoin="round" />
      <path d={ARTERIAL} fill="none" stroke="#d0d3e0" strokeWidth="14" strokeLinejoin="round" />
      <path d={FREEWAYS} fill="none" stroke="#9196aa" strokeWidth="37" strokeLinejoin="round" />
      <path d={FREEWAYS} fill="none" stroke="#b1b5c5" strokeWidth="27" strokeLinejoin="round" />

      {/* driven route */}
      <path d="M772 402 L900 398 L866 290 L1290 283 L1660 308 Q1740 318 1790 360 Q1850 420 1870 490 L1910 640 Q1940 740 2020 805 L2255 965" fill="none" stroke={ROUTE} strokeWidth="34" strokeLinejoin="round" />
      <StartRing x={772} y={371} />
      <MapPin x={2256} y={977} />

      <path id="turnpike" d="M-90 70 C20 290 150 395 310 398 C420 398 520 365 660 290" fill="none" />
      <text fontSize="118" fontWeight="500" fill="#444" stroke="#f6f8f2" strokeWidth="10" paintOrder="stroke" textAnchor="end">
        <textPath href="#turnpike" startOffset="94%">
          URNPIKE E
        </textPath>
      </text>

      <UsShield x={1104} y={816}>75</UsShield>
      <g>
        <rect x="2793" y="870" width="152" height="146" rx="24" fill="#fff" stroke="#444" strokeWidth="23" />
        <text x="2869" y="958" fontSize="70" fontWeight="700" fill="#333" textAnchor="middle">
          78
        </text>
        <text x="2868" y="993" fontSize="24" fontWeight="700" fill="#444" textAnchor="middle">
          TEXAS
        </text>
      </g>
      <circle cx="2799" cy="36" r="17" fill="#161616" />
      <Label x={2182} y={128} size={158}>
        Murphy
      </Label>
      <MapCredit x={122} color="#333" />
      <Label x={220} y={1212} size={220}>
        Richardson
      </Label>
      <LegalLink />
    </svg>
  );
}

const ARTERIAL = 'M39 45 L165 48 L182 65 L202 125 L238 160 H470 L530 187 H610 L690 213 H1025 L1090 180 H1230';

const FREEWAYS =
  'M30 220 L120 310 L270 365 L400 360 L500 330 L620 282 H1250 L1660 305 L1740 325 L1850 410 L1910 590 L1950 710 L2020 790 L2210 925 L2430 1130 L2600 1250 M1224 30 L1238 200 L1220 400 L1192 590 L1145 710 L1060 910 L1010 1005 L890 1140 L835 1250';

function RideCard({ ride }: { ride: Ride }) {
  const isDriver = ride.role === 'driver';
  return (
    <article className="overflow-hidden rounded-[54px] bg-[#f1f1f1] pt-1 shadow-[0_10px_8px_rgba(0,0,0,0.25)]">
      <h2 className="flex h-[144px] items-center justify-center rounded-t-[54px] bg-[#dc352a] pt-3 text-[51px] leading-[64px] text-white">
        {ride.title}
      </h2>

      <div className={isDriver ? 'pr-[37px] pl-[38px]' : 'pr-[37px] pl-[45px]'}>
        <div className="flex items-center justify-between pt-7 pr-[6px] pl-[9px]">
          <p className="text-[54px] leading-[60px] font-medium text-[#2f3948]">{ride.date}</p>
          <RoleBadge role={ride.role} />
        </div>
        <div className="flex h-[235px] pt-[45px] text-[48px] leading-[60px] font-light text-[#6f788a]">
          <div className="pt-2">
            <RouteGlyph />
          </div>
          <div className="flex flex-1 flex-col gap-[42px] pl-10">
            <p>{ride.start}</p>
            <p>{ride.end}</p>
          </div>
          <div className="flex flex-col gap-9 text-right">
            <p className="text-[54px] leading-[66px] font-medium">{ride.duration}</p>
            <p>{ride.distance}</p>
          </div>
        </div>
      </div>

      {isDriver ? <DentonMap /> : <RichardsonMap />}

      {isDriver ? (
        <div className="flex gap-[72px] pt-[21px] pr-[81px] pb-[30px] pl-[66px] text-[41px] leading-[48px] text-white">
          <button type="button" className="h-[105px] flex-1 rounded-[54px] bg-[#e46a65] pr-4 pb-1 shadow-[0_12px_16px_rgba(0,0,0,0.25)]">
            Grade: 92%
          </button>
          <button type="button" className="h-[105px] flex-1 rounded-[54px] bg-[#e46a65] pr-4 pb-1 shadow-[0_12px_16px_rgba(0,0,0,0.25)]">
            More Details
          </button>
        </div>
      ) : (
        <p className="flex h-[154px] items-center justify-center pb-4 text-[41px] leading-[48px] text-black">
          Passenger Rides Do Not Effect Your Policy
        </p>
      )}
    </article>
  );
}

export default function App() {
  return (
    <div className="min-h-screen bg-white font-['Inter',sans-serif] text-black">
      <StatusBar />
      <nav className="h-[147px] pt-1 pl-[18px]">
        <button type="button" aria-label="Back" className="block">
          <svg className="h-[84px] w-[84px]" viewBox="0 0 84 84" fill="none" stroke="#000" strokeWidth="11" aria-hidden="true">
            <path d="M46 4 L8 42 L46 80 M8 42 H84" />
          </svg>
        </button>
      </nav>

      <main className="flex flex-col gap-20 px-[93px]">
        {RIDES.map((ride) => (
          <RideCard key={ride.id} ride={ride} />
        ))}
      </main>

      <div className="mx-auto mt-[114px] h-[15px] w-[417px] rounded-full bg-black" />
    </div>
  );
}
